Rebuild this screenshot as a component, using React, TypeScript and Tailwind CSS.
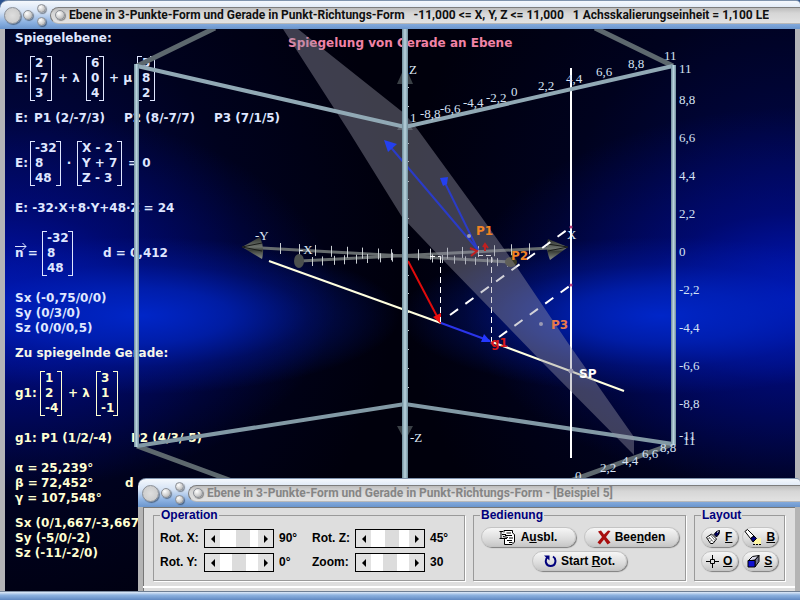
import type { ReactNode } from "react";

type TitleBarProps = { title: string; active?: boolean };

const knob =
  "rounded-full border border-[#8b8f96] bg-[radial-gradient(circle_at_35%_30%,#ffffff,#cfcfcf_55%,#a2a2a2)] shadow-[1px_1px_1px_rgba(0,0,0,0.4)]";

function TitleBar({ title, active = false }: TitleBarProps) {
  return (
    <header className="flex h-[29px] items-center rounded-tl-lg rounded-tr-sm border-t border-[#7f93ad] bg-[linear-gradient(#f4f8fd,#d3e1f4_40%,#8db2e2_75%,#6a95cd)] pl-1">
      <button
        aria-label="Menü"
        className="size-[17px] shrink-0 rounded-full border border-[#8b8f96] bg-[radial-gradient(circle,#dedede,#c6c6c6)] shadow-[1px_1px_1px_rgba(0,0,0,0.4)]"
      />
      <button aria-label="Anheften" className={`ml-0.5 size-[10px] shrink-0 ${knob}`} />
      <div className="ml-1 flex shrink-0 flex-col gap-1">
        <button aria-label="Maximieren" className={`size-[9px] ${knob}`} />
        <button aria-label="Minimieren" className={`size-[9px] ${knob}`} />
      </div>
      <div className="ml-1 flex h-[17px] min-w-0 flex-1 items-center gap-1 rounded-l-full border border-r-0 border-[#7d7d7d] border-b-[#b9b9b9] bg-[linear-gradient(#bdbdbd,#d6d6d6_35%,#e2e2e2)] pl-1">
        <span className={`size-[10px] shrink-0 ${knob}`} />
        <h1
          className={
            active
              ? "truncate whitespace-pre font-['Roboto',sans-serif] text-[12px] leading-[15px] font-bold text-[#101010]"
              : "truncate whitespace-pre font-['Roboto',sans-serif] text-[12px] leading-[15px] font-bold text-[#858585]"
          }
        >
          {title}
        </h1>
      </div>
    </header>
  );
}

function Vec({ rows, className }: { rows: string[]; className: string }) {
  return (
    <span className={`flex justify-between whitespace-pre ${className}`}>
      <span className="w-[5px] shrink-0 border-y border-l border-current" />
      <span className="flex min-w-0 flex-1 flex-col items-start">
        {rows.map((r) => (
          <span key={r}>{r}</span>
        ))}
      </span>
      <span className="w-[5px] shrink-0 border-y border-r border-current" />
    </span>
  );
}

function Equations() {
  return (
    <div className="flex flex-col pt-[2px] pl-[10px] font-['DejaVu_Sans',sans-serif] text-[12px] leading-[15px] font-bold whitespace-pre text-[#dfe6ff]">
      <h2>Spiegelebene:</h2>
      <div className="mt-[10px] flex items-center">
        <span className="w-[15px]">E:</span>
        <Vec rows={["2", "-7", "3"]} className="w-[22px]" />
        <span className="w-[34px] text-center">+ λ</span>
        <Vec rows={["6", "0", "4"]} className="w-[18px]" />
        <span className="w-[33px] text-center">+ μ</span>
        <Vec rows={["5", "8", "2"]} className="w-[18px]" />
      </div>
      <p className="mt-[10px] flex">
        <span className="w-[19px]">E:</span>
        <span className="w-[90px]">P1 (2/-7/3)</span>
        <span className="w-[90px]">P2 (8/-7/7)</span>
        <span>P3 (7/1/5)</span>
      </p>
      <div className="mt-[15px] flex items-center">
        <span className="w-[15px]">E:</span>
        <Vec rows={["-32", "8", "48"]} className="w-[31px]" />
        <span className="w-[16px] text-center">·</span>
        <Vec rows={["X - 2", "Y + 7", "Z - 3"]} className="w-[45px]" />
        <span className="pl-[6px]">= 0</span>
      </div>
      <p className="mt-[15px]">E: -32·X+8·Y+48·Z = 24</p>
      <div className="mt-[15px] flex items-center">
        <span className="relative w-[27px]">
          n =
          <svg className="absolute -top-1 left-0 h-2 w-3" viewBox="0 0 12 8" fill="none" stroke="currentColor">
            <path d="M0 4.500H11M7.500 1L11 4.500L7.500 8" />
          </svg>
        </span>
        <Vec rows={["-32", "8", "48"]} className="w-[31px]" />
        <span className="pl-[30px]">d = 0,412</span>
      </div>
      <div className="mt-[15px]">
        <p>Sx (-0,75/0/0)</p>
        <p>Sy (0/3/0)</p>
        <p>Sz (0/0/0,5)</p>
      </div>

      <div className="mt-[10px] flex flex-col text-[#ffffd2]">
        <h2 className="text-[#f6f6e8]">Zu spiegelnde Gerade:</h2>
        <div className="mt-[10px] flex items-center">
          <span className="w-[25px]">g1:</span>
          <Vec rows={["1", "2", "-4"]} className="w-[22px]" />
          <span className="w-[34px] text-center">+ λ</span>
          <Vec rows={["3", "1", "-1"]} className="w-[22px]" />
        </div>
        <p className="mt-[15px] flex">
          <span className="w-[26px]">g1:</span>
          <span className="w-[90px]">P1 (1/2/-4)</span>
          <span>P2 (4/3/-5)</span>
        </p>
        <div className="mt-[15px] grid grid-cols-[26px_84px_1fr]">
          <span>α =</span>
          <span>25,239°</span>
          <span />
          <span>β =</span>
          <span>72,452°</span>
          <span>d</span>
          <span>γ =</span>
          <span>107,548°</span>
        </div>
        <div className="mt-[10px] pb-px">
          <p>Sx (0/1,667/-3,667</p>
          <p>Sy (-5/0/-2)</p>
          <p>Sz (-11/-2/0)</p>
        </div>
      </div>
    </div>
  );
}

const upperTicks = [280, 299, 315, 331, 347, 362, 378, 391];
const lowerTicks = [432, 442, 454, 465, 475, 487, 497, 507];
const xTicksLeft = [312, 322, 334, 344, 356, 367, 380, 392];
const xTicksRight = [418, 430, 447, 462, 478, 494, 511, 529];
const zTicks = [87, 106, 143, 161, 181, 199, 218, 237, 275, 293, 312, 330, 349, 368, 387];

// height of the Y and X axes at a given x
const yAxis = (x: number) => 256 + (x - 405) * 0.056;
const xAxis = (x: number) => 256 - (x - 405) * 0.054;

const topLabels: [number, number, string][] = [
  [410, 122, "1"],
  [420, 118, "-8,8"],
  [440, 113, "-6,6"],
  [463, 107, "-4,4"],
  [486, 102, "-2,2"],
  [511, 96, "0"],
  [538, 90, "2,2"],
  [566, 83, "4,4"],
  [596, 76, "6,6"],
  [628, 68, "8,8"],
  [664, 60, "11"],
];

const sideLabels: [number, number, string][] = [
  [679, 73, "11"],
  [679, 104, "8,8"],
  [679, 142, "6,6"],
  [679, 180, "4,4"],
  [679, 218, "2,2"],
  [679, 256, "0"],
  [679, 294, "-2,2"],
  [679, 332, "-4,4"],
  [679, 370, "-6,6"],
  [679, 408, "-8,8"],
  [679, 440, "-11"],
  [683, 445, "11"],
];

const bottomLabels: [number, number, string][] = [
  [575, 480, "0"],
  [600, 472, "2,2"],
  [622, 465, "4,4"],
  [642, 458, "6,6"],
  [660, 452, "8,8"],
];

function Scene() {
  return (
    <svg
      className="pointer-events-none absolute inset-0 h-full w-full"
      viewBox="5 29 790 562"
      preserveAspectRatio="xMinYMin slice"
      fill="none"
    >
      <defs>
        <linearGradient id="cone" x1="0" y1="0" x2="0" y2="1">
          <stop offset="0" stopColor="#2c302c" />
          <stop offset="0.45" stopColor="#6d736d" />
          <stop offset="0.6" stopColor="#3a3e38" />
          <stop offset="1" stopColor="#8b9088" />
        </linearGradient>
        <linearGradient id="post" x1="0" y1="0" x2="1" y2="0">
          <stop offset="0" stopColor="#6d8b98" />
          <stop offset="0.5" stopColor="#b9d3de" />
          <stop offset="1" stopColor="#6f8c9a" />
        </linearGradient>
      </defs>

      {/* far edges of the cube */}
      <g stroke="#5d686e" strokeWidth="5">
        <path d="M137 66L215 28M595 28L673 66" />
        <path d="M137 446L232 481M673 444L570 481" />
      </g>
      <g stroke="#8299a5" strokeWidth="4">
        <path d="M137 446L405 404L673 444" />
      </g>

      {/* Z arrows */}
      <path d="M405 66L397 84H413Z" fill="#3a4046" />
      <path d="M405 119L397 130H413Z" fill="#3a4046" />
      <path d="M405 441L397 426H413Z" fill="#3a4046" />

      {/* X and Y axes */}
      <g stroke="#666c6e" strokeWidth="3">
        <path d="M262 248L511 262" />
        <path d="M300 261L550 248" />
      </g>
      <g stroke="#c9ced2">
        {upperTicks.map((x) => (
          <path key={x} d={`M${x + 0.5} ${yAxis(x) - 6}V${yAxis(x) + 5}`} />
        ))}
        {lowerTicks.map((x) => (
          <path key={x} d={`M${x + 0.5} ${yAxis(x) - 3}V${yAxis(x) + 5}`} />
        ))}
        {xTicksLeft.map((x) => (
          <path key={x} d={`M${x + 0.5} ${xAxis(x) - 4}V${xAxis(x) + 5}`} />
        ))}
        {xTicksRight.map((x) => (
          <path key={x} d={`M${x + 0.5} ${xAxis(x) - 6}V${xAxis(x) + 5}`} />
        ))}
        {zTicks.map((y) => (
          <path key={y} d={`M403 ${y + 0.5}H409`} />
        ))}
      </g>
      <path d="M242 247L260 237Q265 248 262 259Z" fill="url(#cone)" />
      <path d="M568 247L548 239Q545 248 550 260Z" fill="url(#cone)" />
      <path d="M242 247L262 243M242 247L262 251M568 247L547 244M568 247L548 251" stroke="#191c19" />
      <ellipse cx="299" cy="261" rx="5" ry="7" fill="#4b504e" />
      <ellipse cx="511" cy="262" rx="6" ry="5" fill="#3b3a24" />

      <g fill="#dfe8f6" fontFamily="Liberation Serif, serif" fontSize="13">
        <text x="409" y="74">Z</text>
        <text x="410" y="442">-Z</text>
        <text x="255" y="240">-Y</text>
        <text x="299" y="254">-X</text>
        <text x="567" y="239">X</text>
      </g>

      <text
        x="288"
        y="47"
        fill="#f083a6"
        fontFamily="DejaVu Sans, sans-serif"
        fontSize="12"
        fontWeight="bold"
      >
        Spiegelung von Gerade an Ebene
      </text>

      {/* line g1 */}
      <g stroke="#ffffe0" strokeWidth="2">
        <path d="M269 261L441 323" />
        <path d="M492 342L624 391" />
      </g>
      <path d="M441 323L490 341" stroke="#2a34ea" strokeWidth="2" />
      <path d="M491 342L481 342L484 334Z" fill="#2438ff" />
      <path d="M408 261L440 322" stroke="#e00b0b" strokeWidth="2" />
      <path d="M441 324L433 317L441 313Z" fill="#f01010" />

      <g stroke="#ffffff">
        <path d="M440.500 257V322M491.500 257V342" strokeDasharray="6 4" />
        <path d="M430 256.500H441M478 255.500H492V262" strokeDasharray="5 3" />
      </g>
      <g stroke="#ffffff" strokeWidth="2" strokeDasharray="10 9">
        <path d="M450 315L571 227" />
        <path d="M499 337L571 285" />
      </g>
      <path d="M571 68V458" stroke="#ffffff" strokeWidth="2" />

      {/* mirror plane */}
      <path
        d="M283 29L348 130L402 217L443 260L540 360L634 455V437L568 343L512 260L480 215L418 130L405 114L298 29Z"
        fill="#9494a4"
        fillOpacity="0.42"
      />

      {/* direction vectors lying in the plane */}
      <g stroke="#2a3bc8" strokeWidth="2">
        <path d="M478 250L388 144" />
        <path d="M478 250L444 181" />
      </g>
      <path d="M384 140L397 144L388 152Z" fill="#2440f0" />
      <path d="M440 178L448 177L447 184L443 186Z" fill="#2440f0" />

      {/* near edges of the cube */}
      <path d="M137 66L405 127L673 66" stroke="#91a9b5" strokeWidth="4" />
      <rect x="134" y="64" width="5" height="383" fill="url(#post)" />
      <rect x="402" y="29" width="6" height="452" fill="url(#post)" />
      <rect x="671" y="65" width="5" height="380" fill="url(#post)" />

      <g fill="#c04080">
        <circle cx="571" cy="227" r="1.500" />
        <circle cx="571" cy="285" r="1.500" />
        <circle cx="492" cy="343" r="1.500" />
      </g>
      <g fill="#9a9ab4">
        <circle cx="469" cy="236" r="2" />
        <circle cx="541" cy="324" r="2" />
        <circle cx="571" cy="371" r="2.500" />
      </g>
      <path d="M470 248L477 251L471 256M485 251V244M483 247L485 244L488 248" stroke="#c02020" strokeWidth="2" />

      <g fontFamily="DejaVu Sans, sans-serif" fontSize="12" fontWeight="bold">
        <text x="476" y="235" fill="#f08324">P1</text>
        <text x="511" y="260" fill="#f08324">P2</text>
        <text x="551" y="329" fill="#e87a4c">P3</text>
        <text x="579" y="378" fill="#ffffff">SP</text>
        <text x="491" y="347" fill="#d81818">g1</text>
      </g>

      <g fill="#d6e2f4" fontFamily="Liberation Serif, serif" fontSize="13">
        {[...topLabels, ...sideLabels, ...bottomLabels].map(([x, y, label]) => (
          <text key={`${x}-${y}`} x={x} y={y}>
            {label}
          </text>
        ))}
      </g>
    </svg>
  );
}

type SliderProps = { id: string; label: string; shown: string; value: number; min: number; max: number };

const sliders: SliderProps[] = [
  { id: "rot-x", label: "Rot. X:", shown: "90°", value: 90, min: -250, max: 250 },
  { id: "rot-z", label: "Rot. Z:", shown: "45°", value: 45, min: -250, max: 250 },
  { id: "rot-y", label: "Rot. Y:", shown: "0°", value: 0, min: -250, max: 250 },
  { id: "zoom", label: "Zoom:", shown: "30", value: 30, min: 0, max: 60 },
];

function Slider({ id, label, shown, value, min, max }: SliderProps) {
  return (
    <>
      <label htmlFor={id}>{label}</label>
      <div className="flex h-[19px] border border-black bg-white">
        <button aria-label={`${label} verringern`} className="flex w-[15px] shrink-0 items-center justify-center bg-[#e2e2e2]">
          <svg className="h-2 w-1" viewBox="0 0 4 8">
            <path d="M4 0V8L0 4Z" />
          </svg>
        </button>
        <input
          id={id}
          type="range"
          min={min}
          max={max}
          defaultValue={value}
          className="m-0 h-full w-0 min-w-0 flex-1 appearance-none bg-white [&::-webkit-slider-thumb]:h-[17px] [&::-webkit-slider-thumb]:w-[14px] [&::-webkit-slider-thumb]:appearance-none [&::-webkit-slider-thumb]:bg-[#dcdcdc]"
        />
        <button aria-label={`${label} erhöhen`} className="flex w-[15px] shrink-0 items-center justify-center bg-[#e2e2e2]">
          <svg className="h-2 w-1" viewBox="0 0 4 8">
            <path d="M0 0V8L4 4Z" />
          </svg>
        </button>
      </div>
      <output htmlFor={id} className="pl-[5px]">
        {shown}
      </output>
    </>
  );
}

function Group({ title, children }: { title: string; children: ReactNode }) {
  return (
    <fieldset className="min-w-0 border border-[#9a9a9a] px-[6px] pb-2 shadow-[1px_1px_0_#ffffff]">
      <legend className="px-px text-[12px] leading-[14px] text-[#00007c]">{title}</legend>
      {children}
    </fieldset>
  );
}

const pill =
  "flex h-5 items-center justify-center gap-1 rounded-full border border-[#c4c4c4] bg-[linear-gradient(#f6f6f6,#dddddd_60%,#c8c8c8)] shadow-[1px_1px_1px_#7e7e7e]";

function HideIcon() {
  return (
    <svg className="h-4 w-[18px]" viewBox="0 0 18 16" fill="none" stroke="#000">
      <path d="M5 3.500V1.500H13.500V4L15.500 5.500V13L13 15.500H5.500V9.500" fill="#fff" />
      <path d="M0.500 2.500H4M2 2.500V9.500M0.500 9.500H8M7.500 4H12M6 6.500H13M10 9H14M8 11.500H13M10 13.500H13.500" />
      <path d="M3 5.500H7M4 7.500L9 8.500" />
    </svg>
  );
}

function CloseIcon() {
  return (
    <svg className="h-[15px] w-[14px]" viewBox="0 0 14 15" fill="#a80d0d">
      <path d="M1 1.500L4 0.500L7 4.500L11 0.500L13.500 1L9 7L13.500 12.500L10.500 14.500L7 9.500L3 14.500L0.500 12.500L5 7Z" />
    </svg>
  );
}

function RotateIcon() {
  return (
    <svg className="h-[14px] w-[13px]" viewBox="0 0 13 14" fill="none" stroke="#00007c" strokeWidth="2">
      <path d="M9 2.500C13 5 12 12 6.500 12C1.500 12 0.500 6 3.500 3" />
      <path d="M0 1.500H5.500V6.500Z" fill="#00007c" stroke="none" />
    </svg>
  );
}

function BrushIcon() {
  return (
    <svg className="size-[15px]" viewBox="0 0 15 15" fill="none" stroke="#000">
      <path d="M0.500 7.500L5.500 4L10.500 9L7 13.500H4.500Z" fill="#fff" />
      <path d="M2.500 6.500L7.500 12M4.500 5L9 10.500M2 9L4 8M4 11.500L6 10" stroke="#777" />
      <path d="M8 4.500L10.500 1.500L13.500 0.500L13 4L10.500 7Z" fill="#00005c" />
      <path d="M11 2.500L12.500 1.500" stroke="#fff" />
    </svg>
  );
}

function TorchIcon() {
  return (
    <svg className="h-4 w-[18px]" viewBox="0 0 18 16" fill="none" stroke="#000">
      <path d="M11 10L17 9V15H10Z" fill="#fff6a0" stroke="none" />
      <path d="M1 2.500L3.500 0.500L10 7L6.500 9.500Z" fill="#fff" />
      <path d="M6.500 9.500L10 7L12.500 9.500L9 13Z" fill="#00007c" />
      <path d="M9 15.500H17" strokeDasharray="2 1" />
    </svg>
  );
}

function OriginIcon() {
  return (
    <svg className="size-[13px]" viewBox="0 0 13 13" fill="none" stroke="#000">
      <path d="M6.500 0V4M6.500 9V13M0 6.500H4M9 6.500H13M4.500 4.500H8.500V8.500H4.500Z" />
    </svg>
  );
}

function CubeIcon() {
  return (
    <svg className="size-[13px]" viewBox="0 0 13 13" stroke="#000">
      <path d="M1 6L5.500 1.500L12 0.500L8 5Z" fill="#d8d8e8" />
      <path d="M8 5L12 0.500V6.500L8 12Z" fill="#70708a" />
      <path d="M1 5.500H8V12H1Z" fill="#1010d0" />
    </svg>
  );
}

function ControlDialog() {
  return (
    <section className="absolute right-0 bottom-0 left-[138px] flex flex-col font-['Liberation_Sans',Arial,sans-serif] text-[12px] font-bold text-black">
      <TitleBar title="Ebene in 3-Punkte-Form und Gerade in Punkt-Richtungs-Form - [Beispiel 5]" />
      <div className="border-x-[5px] border-x-[#b4b4b4] bg-[#dedede] pb-[3px] shadow-[inset_1px_1px_0_#777777]">
        <div className="grid grid-cols-[312fr_213fr_91fr] gap-2 border-b-2 border-white px-[10px] pt-px pb-[5px]">
          <Group title="Operation">
            <div className="grid grid-cols-[44px_70px_38px_43px_70px_1fr] items-center gap-y-[5px] pt-[7px] leading-[19px]">
              {sliders.map((s) => (
                <Slider key={s.id} {...s} />
              ))}
            </div>
          </Group>
          <Group title="Bedienung">
            <div className="flex flex-wrap justify-center gap-x-2 gap-y-1 pt-[5px]">
              <button className={`w-[95px] ${pill}`}>
                <HideIcon />
                <span>
                  A<u>u</u>sbl.
                </span>
              </button>
              <button className={`w-[95px] ${pill}`}>
                <CloseIcon />
                <span>
                  Bee<u>n</u>den
                </span>
              </button>
              <button className={`w-[95px] ${pill}`}>
                <RotateIcon />
                <span>
                  Start <u>R</u>ot.
                </span>
              </button>
            </div>
          </Group>
          <Group title="Layout">
            <div className="grid grid-cols-2 gap-1 pt-[5px]">
              <button className={pill}>
                <BrushIcon />
                <u>F</u>
              </button>
              <button className={pill}>
                <TorchIcon />
                <u>B</u>
              </button>
              <button className={pill}>
                <OriginIcon />
                <u>O</u>
              </button>
              <button className={pill}>
                <CubeIcon />
                <u>S</u>
              </button>
            </div>
          </Group>
        </div>
      </div>
      <footer className="h-[9px] border-t border-[#6f7f94] bg-[linear-gradient(#dfeaf8,#8db2e0_40%,#6089c2)]" />
    </section>
  );
}

export default function App() {
  return (
    <main className="relative flex min-h-screen w-full flex-col overflow-hidden bg-[#2c5390] font-['Liberation_Sans',Arial,sans-serif]">
      <TitleBar
        active
        title="Ebene in 3-Punkte-Form und Gerade in Punkt-Richtungs-Form   -11,000 <= X, Y, Z <= 11,000   1 Achsskalierungseinheit = 1,100 LE"
      />
      <div className="relative flex-1 border-x-[5px] border-x-[#b4b4b8] bg-[#00000c] bg-[radial-gradient(ellipse_33%_14%_at_17%_51%,#0026c8_0%,#0024c0c0_35%,#001cac60_65%,#0018a000_100%),radial-gradient(ellipse_33%_14%_at_83%_51%,#0026c8_0%,#0024c0c0_35%,#001cac60_65%,#0018a000_100%),radial-gradient(ellipse_42%_34%_at_0%_48%,#0014b0_0%,#000c9090_45%,#00086000_100%),radial-gradient(ellipse_42%_34%_at_100%_48%,#0018bc_0%,#000c9090_45%,#00086000_100%),radial-gradient(ellipse_50%_75%_at_0%_40%,#00085c_0%,#00043080_60%,#00000c00_100%),radial-gradient(ellipse_50%_75%_at_100%_40%,#00085c_0%,#00043080_60%,#00000c00_100%)]">
        <Equations />
        <Scene />
      </div>
      <footer className="h-[9px] border-t border-[#7f8ea3] bg-[linear-gradient(#dfeaf8,#8db2e0_40%,#6089c2)]" />
      <ControlDialog />
    </main>
  );
}
